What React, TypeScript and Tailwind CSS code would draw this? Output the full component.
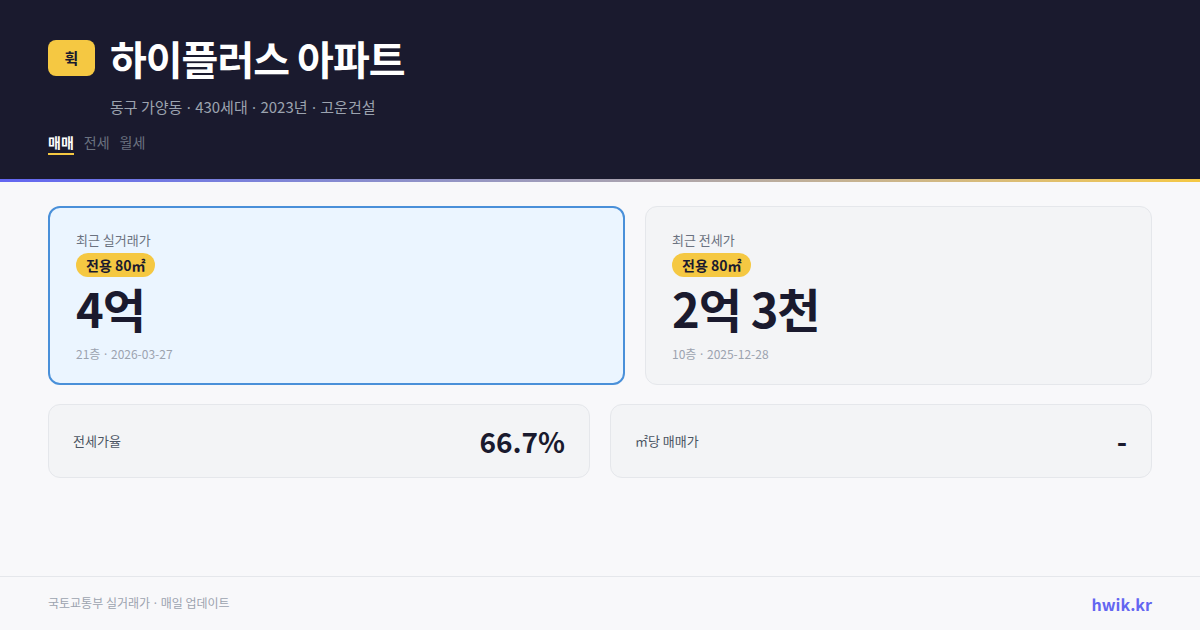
const Dot = () => <span className="mx-[1px]" style={{ fontFamily: '"Noto Sans", sans-serif' }}>·</span>;

export default function App() {
  const font = { fontFamily: '"Noto Sans CJK KR", "Noto Sans", sans-serif' };

  return (
    <div className="w-[1200px] h-[630px] bg-[#f8f8fa] flex flex-col overflow-hidden" style={font}>
      {/* Header */}
      <div className="bg-[#1a1a2e] px-12 pt-[30px] h-[179px]">
        <div className="flex items-center gap-[15px]">
          <div className="w-[47px] h-[36px] rounded-lg bg-[#f5c842] flex items-center justify-center text-[15px] font-bold text-[#1a1a2e]">
            휙
          </div>
          <h1 className="text-[40px] leading-[56px] font-bold text-white tracking-[-1px]">하이플러스 아파트</h1>
        </div>
        <p className="mt-[10px] ml-[62px] text-[15px] leading-[22px] text-[#9ca3af]">
          동구 가양동 <Dot /> 430세대 <Dot /> 2023년 <Dot /> 고운건설
        </p>
        <div className="mt-[14px] flex gap-[10px] text-[14px] leading-[20px]">
          <div className="flex flex-col">
            <span className="font-bold text-white">매매</span>
            <span className="mt-[1px] h-[2px] bg-[#f5c842]" />
          </div>
          <span className="text-[#6b7280]">전세</span>
          <span className="text-[#6b7280]">월세</span>
        </div>
      </div>
      <div className="h-[3px] bg-gradient-to-r from-[#6366f1] to-[#f5c842]" />

      {/* Content */}
      <div className="flex-1 px-12 pt-6">
        <div className="flex gap-5">
          <div className="w-[577px] h-[179px] rounded-xl border-2 border-[#4a90d9] bg-[#ebf5ff] px-[26px] pt-[22px]">
            <p className="text-[13px] leading-[20px] text-[#6b7280]">최근 실거래가</p>
            <span className="mt-[3px] inline-block rounded-full bg-[#f5c842] px-[10px] text-[14px] leading-[24px] font-bold text-[#1a1a2e]">
              전용 80㎡
            </span>
            <p className="text-[47px] leading-[62px] font-bold text-[#1a1a2e] tracking-[-1px]">4억</p>
            <p className="mt-[6px] text-[12px] leading-[18px] text-[#9ca3af]">
              21층 <Dot /> 2026-03-27
            </p>
          </div>
          <div className="flex-1 h-[179px] rounded-xl border border-[#e5e7eb] bg-[#f3f4f6] px-[26px] pt-[23px]">
            <p className="text-[13px] leading-[20px] text-[#6b7280]">최근 전세가</p>
            <span className="mt-[3px] inline-block rounded-full bg-[#f5c842] px-[10px] text-[14px] leading-[24px] font-bold text-[#1a1a2e]">
              전용 80㎡
            </span>
            <p className="text-[47px] leading-[62px] font-bold text-[#1a1a2e] tracking-[-1px]">2억 3천</p>
            <p className="mt-[6px] text-[12px] leading-[18px] text-[#9ca3af]">
              10층 <Dot /> 2025-12-28
            </p>
          </div>
        </div>

        <div className="mt-[19px] grid grid-cols-2 gap-5">
          <div className="h-[74px] rounded-xl border border-[#e5e7eb] bg-[#f3f4f6] px-6 flex items-center justify-between">
            <span className="text-[13px] text-[#4b5563]">전세가율</span>
            <span className="text-[28px] font-bold text-[#1a1a2e]">66.7%</span>
          </div>
          <div className="h-[74px] rounded-xl border border-[#e5e7eb] bg-[#f3f4f6] px-6 flex items-center justify-between">
            <span className="text-[13px] text-[#4b5563]">㎡당 매매가</span>
            <span className="text-[28px] font-bold text-[#1a1a2e]">-</span>
          </div>
        </div>
      </div>

      {/* Footer */}
      <div className="h-[54px] border-t border-[#e5e7eb] px-12 flex items-center justify-between">
        <span className="text-[12px] text-[#9ca3af]">
          국토교통부 실거래가 <Dot /> 매일 업데이트
        </span>
        <span className="text-[16px] font-bold text-[#6366f1]">hwik.kr</span>
      </div>
    </div>
  );
}
